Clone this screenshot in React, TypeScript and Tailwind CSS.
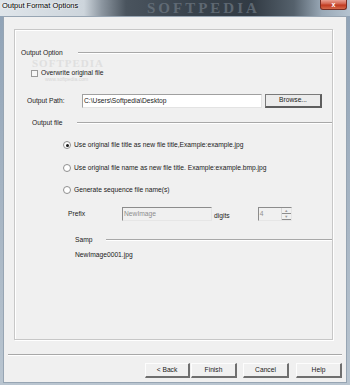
import React from 'react';

const font = "font-['Liberation_Sans',Arial,sans-serif]";

function Radio({ checked }: { checked?: boolean }) {
  return (
    <span className="w-[8px] h-[8px] rounded-full border border-[#8f8f8f] bg-white flex items-center justify-center shrink-0">
      {checked && <span className="w-[3px] h-[3px] rounded-full bg-[#1a1a1a]" />}
    </span>
  );
}

function Button({ label, wide }: { label: string; wide?: boolean }) {
  return (
    <div
      className={`h-[15px] ${wide ? 'w-[46px]' : 'w-[45px]'} bg-[#f0f0f0] border-t border-l border-t-[#fdfdfd] border-l-[#fdfdfd] border-r-2 border-b-2 border-r-[#6f6f6f] border-b-[#6f6f6f] flex items-center justify-center text-[6.7px] text-[#1a1a1a]`}
    >
      {label}
    </div>
  );
}

function SectionLabel({ label, left, lineLeft }: { label: string; left: string; lineLeft: string }) {
  return (
    <div className="h-[14px] flex items-center">
      <span className={`${left} text-[6.7px] text-[#1a1a1a] whitespace-nowrap`}>{label}</span>
      <div className={`flex-1 ${lineLeft} flex flex-col`}>
        <div className="h-px bg-[#a8a8a8]" />
        <div className="h-px bg-white" />
      </div>
    </div>
  );
}

export default function App() {
  return (
    <div className={`w-[350px] h-[385px] overflow-hidden flex flex-col bg-[linear-gradient(180deg,#8fa2b6_0%,#a9b7c5_60%,#b9c5d0_100%)] ${font}`}>
      {/* Title bar */}
      <div className="h-[16px] shrink-0 relative flex items-start justify-between bg-[linear-gradient(90deg,#dfe5ea_0%,#cdd5dc_24%,#8d97a1_29%,#4a545e_36%,#38424c_55%,#323b44_72%,#55616c_84%,#9aa9b7_92%,#b5c3d0_100%)] overflow-hidden">
        <span className="absolute left-[147px] top-0 text-[15px] leading-[16px] tracking-[3px] text-[#6f7983] font-['Liberation_Serif',serif] font-bold opacity-70">SOFTPEDIA</span>
        <span className="relative pl-[2px] pt-[2px] text-[7.5px] text-black leading-none [text-shadow:0_0_3px_#ffffff,0_0_2px_#ffffff]">Output Format Options</span>
        <div className="relative mr-[3px] w-[27px] h-[10px] rounded-b-[3px] border border-t-0 border-[#7a2d22] bg-[linear-gradient(180deg,#e8a193_0%,#d2604a_45%,#c0391f_55%,#d46a4c_100%)] flex items-center justify-center">
          <span className="text-[7px] font-bold text-white leading-none">x</span>
        </div>
      </div>

      {/* Client area */}
      <div className="mx-[3px] mb-[2px] flex-1 bg-[#f0f0f0] border border-[#97a5b3] flex flex-col relative">
        {/* watermark */}
        <span className="absolute left-[28px] top-[38px] text-[11px] tracking-[1px] font-bold text-[#dcdcdc] font-['Liberation_Serif',serif] opacity-80">SOFTPEDIA</span>
        <span className="absolute left-[41px] top-[59px] text-[5px] text-[#d6d6d6]">www.softpedia.com</span>

        {/* group box */}
        <div className="ml-[10px] mt-[12px] w-[319px] h-[311px] border border-[#c7c7c7] shadow-[inset_1px_1px_0_#ffffff,1px_1px_0_#ffffff] flex flex-col">
          <div className="mt-[16px]">
            <SectionLabel label="Output Option" left="ml-[6px]" lineLeft="ml-[15px]" />
          </div>

          <div className="mt-[6px] h-[14px] flex items-center ml-[16px] gap-[3px]">
            <span className="w-[7px] h-[7px] border border-[#9a9a9a] bg-[#f7f7f7]" />
            <span className="text-[6.7px] text-[#1a1a1a]">Overwrite original file</span>
          </div>

          <div className="mt-[14px] h-[14px] flex items-center">
            <span className="ml-[12px] w-[55px] text-[6.7px] text-[#1a1a1a]">Output Path:</span>
            <div className="w-[180px] h-[14px] bg-white border-t border-l border-[#a0a0a0] border-r border-b border-r-[#e3e3e3] border-b-[#e3e3e3] flex items-center pl-[1px]">
              <span className="text-[6.7px] text-[#1a1a1a]">C:\Users\Softpedia\Desktop</span>
            </div>
            <div className="ml-[3px] w-[57px] h-[14px] bg-[#ececec] border border-[#7a7a7a] border-r-2 border-b-2 border-r-[#5e5e5e] border-b-[#5e5e5e] flex items-center justify-center">
              <span className="text-[6.7px] text-[#1a1a1a]">Browse...</span>
            </div>
          </div>

          <div className="mt-[8px]">
            <SectionLabel label="Output file" left="ml-[17px]" lineLeft="ml-[15px]" />
          </div>

          <div className="mt-[8px] h-[14px] flex items-center ml-[48px] gap-[3px]">
            <Radio checked />
            <span className="text-[6.7px] text-[#1a1a1a]">Use original file title as new file title,Example:example.jpg</span>
          </div>
          <div className="mt-[9px] h-[14px] flex items-center ml-[48px] gap-[3px]">
            <Radio />
            <span className="text-[6.7px] text-[#1a1a1a]">Use original file name as new file title. Example:example.bmp.jpg</span>
          </div>
          <div className="mt-[8px] h-[14px] flex items-center ml-[48px] gap-[3px]">
            <Radio />
            <span className="text-[6.7px] text-[#1a1a1a]">Generate sequence file name(s)</span>
          </div>

          <div className="mt-[10px] h-[14px] flex items-center">
            <span className="ml-[53px] w-[54px] text-[6.7px] text-[#1a1a1a]">Prefix</span>
            <div className="w-[90px] h-[14px] bg-[#f0f0f0] border-t border-l border-[#8c8c8c] border-r border-b border-r-[#e6e6e6] border-b-[#e6e6e6] flex items-center pl-[1px]">
              <span className="text-[6.7px] text-[#8d8d8d]">NewImage</span>
            </div>
            <span className="ml-[2px] mt-[5px] text-[6.7px] text-[#1a1a1a]">digits</span>
            <div className="ml-[28px] w-[34px] h-[14px] bg-[#f0f0f0] border-t border-l border-[#8c8c8c] border-r border-b border-r-[#e6e6e6] border-b-[#e6e6e6] flex items-center">
              <span className="pl-[1px] flex-1 text-[6.7px] text-[#8d8d8d]">4</span>
              <div className="w-[10px] h-full flex flex-col border-l border-[#d8d8d8]">
                <div className="flex-1 flex items-center justify-center border-b border-[#8c8c8c] text-[4px] text-[#9a9a9a] leading-none">▲</div>
                <div className="flex-1 flex items-center justify-center border-b border-[#8c8c8c] text-[4px] text-[#9a9a9a] leading-none">▼</div>
              </div>
            </div>
          </div>

          <div className="mt-[12px]">
            <SectionLabel label="Samp" left="ml-[60px]" lineLeft="ml-[14px]" />
          </div>

          <div className="mt-px h-[14px] flex items-center ml-[60px]">
            <span className="text-[6.7px] text-[#1a1a1a]">NewImage0001.jpg</span>
          </div>
        </div>

        {/* separator */}
        <div className="mt-[14px] ml-[4px] w-[334px] flex flex-col">
          <div className="h-px bg-[#a8a8a8]" />
          <div className="h-px bg-white" />
        </div>

        {/* buttons */}
        <div className="mt-[7px] flex justify-end pr-[4px]">
          <Button label="< Back" />
          <div className="ml-px"><Button label="Finish" wide /></div>
          <div className="ml-[6px]"><Button label="Cancel" wide /></div>
          <div className="ml-[7px]"><Button label="Help" wide /></div>
        </div>
      </div>
    </div>
  );
}
